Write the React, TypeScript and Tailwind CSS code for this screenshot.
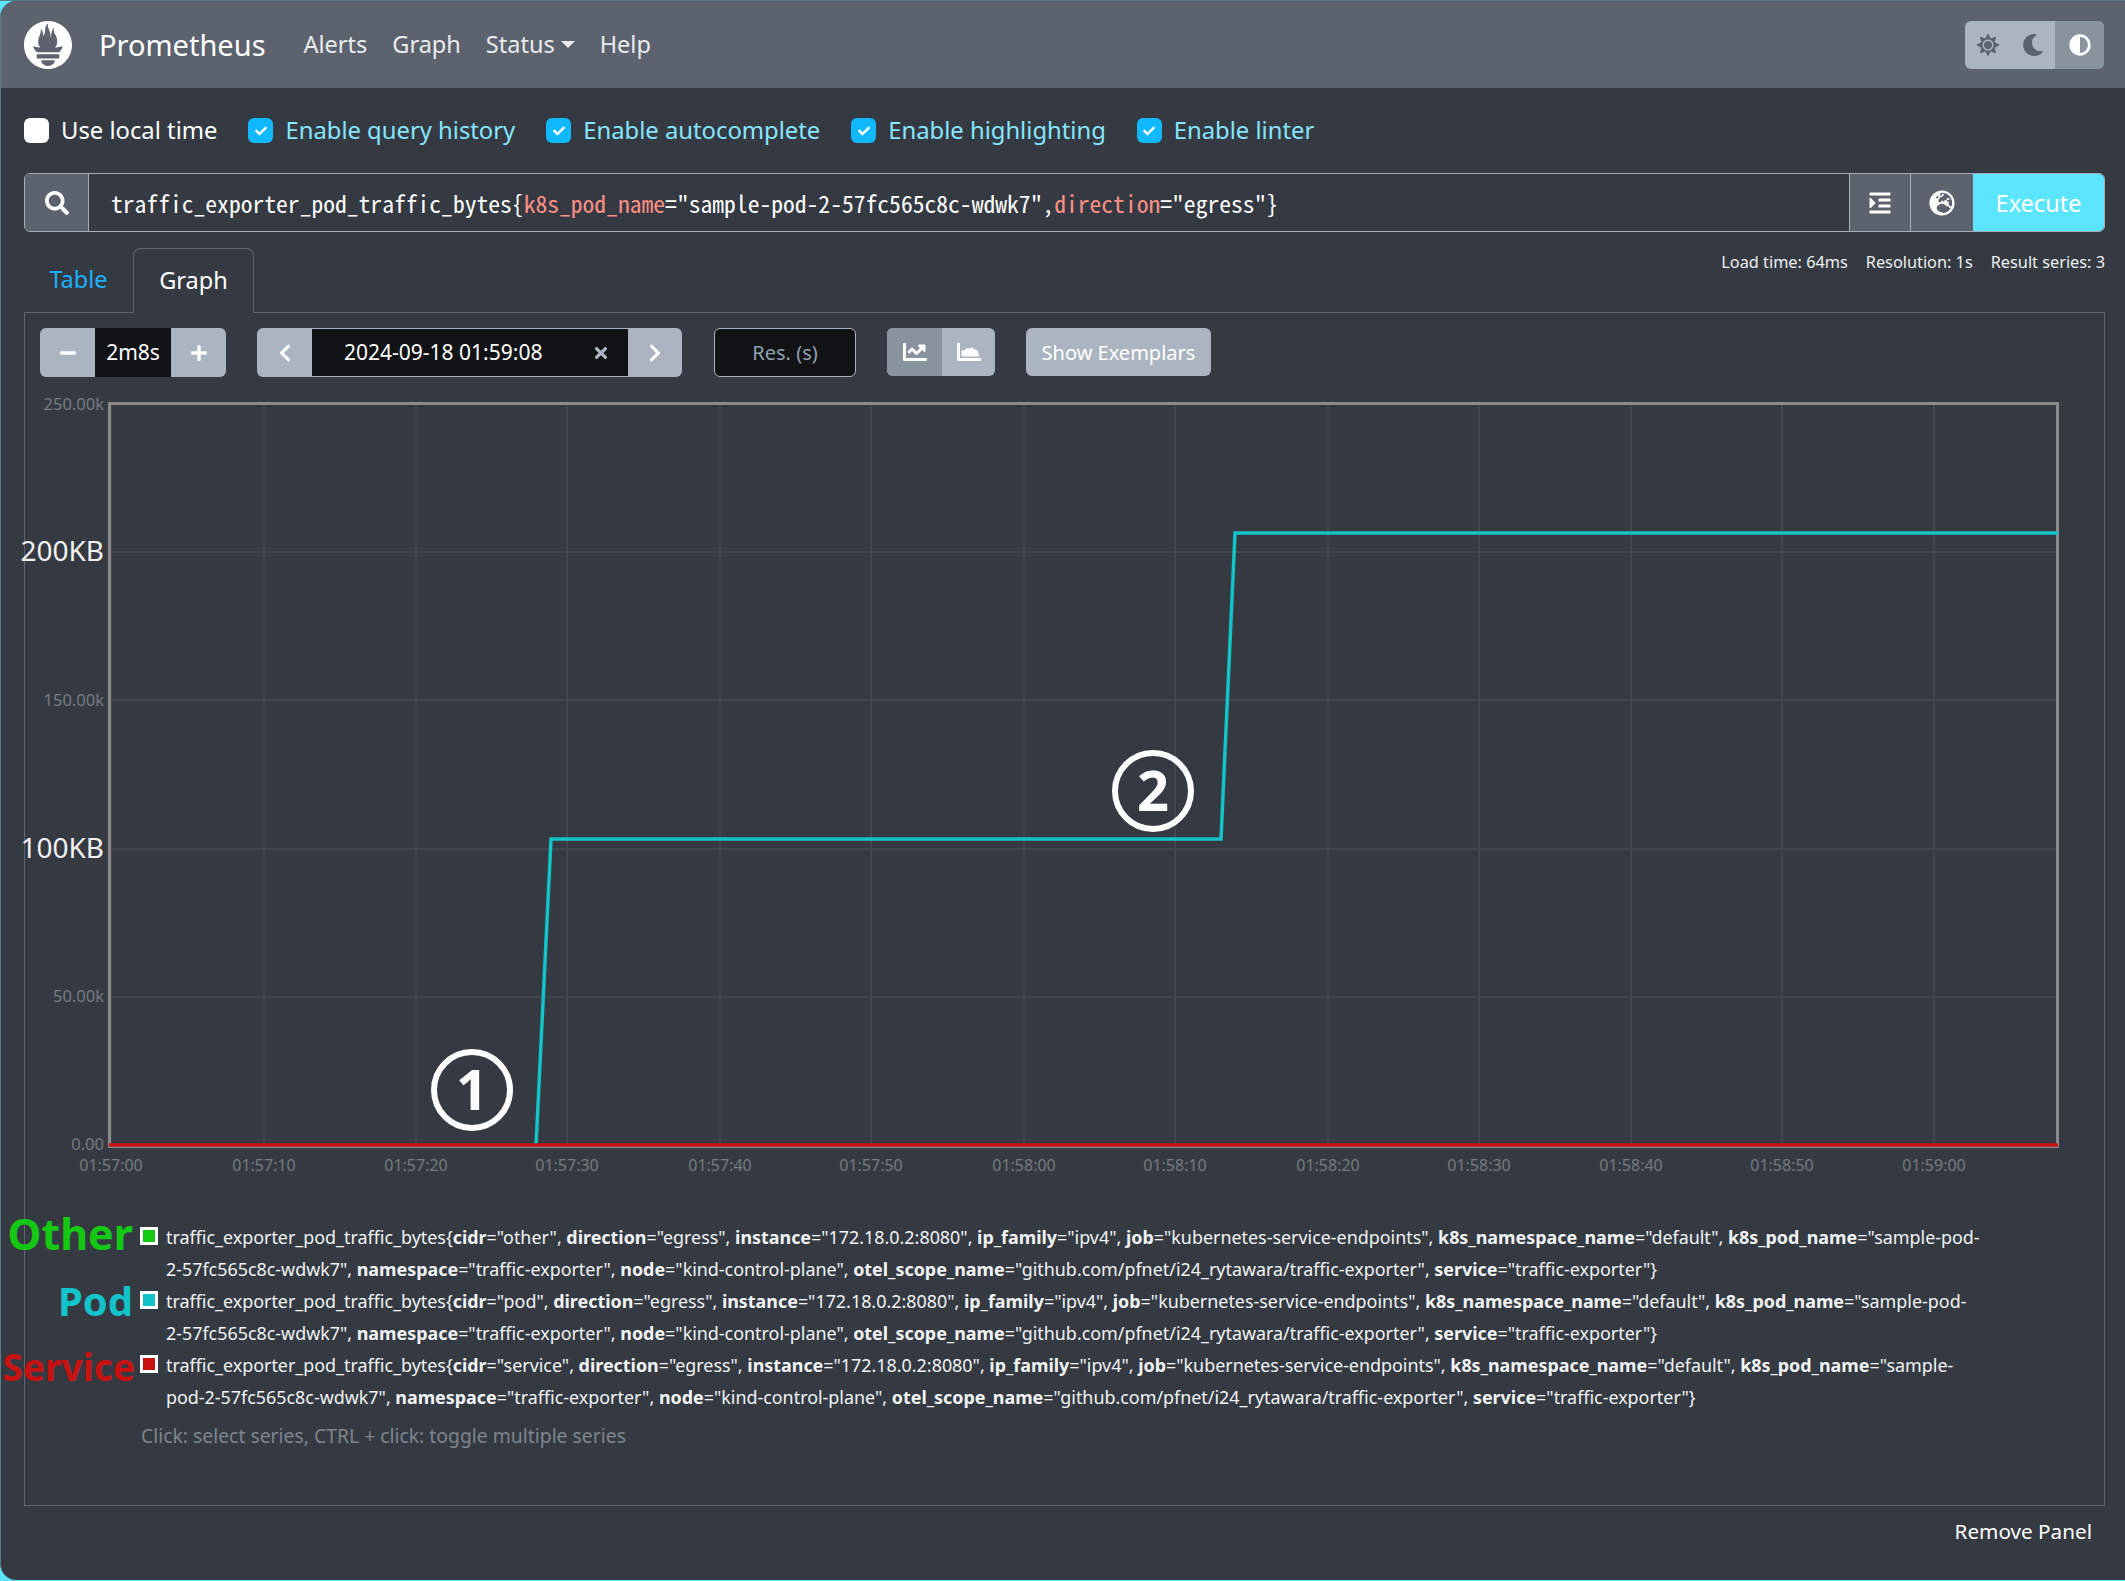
import React from "react";
import { SiPrometheus } from "react-icons/si";
import {
  FaSun,
  FaMoon,
  FaAdjust,
  FaSearch,
  FaIndent,
  FaGlobeEurope,
  FaChartLine,
  FaTimes,
  FaChevronLeft,
  FaChevronRight,
  FaPlus,
  FaMinus,
  FaCheck,
} from "react-icons/fa";

const timeTicks = ["01:57:00", "01:57:10", "01:57:20", "01:57:30", "01:57:40", "01:57:50", "01:58:00", "01:58:10", "01:58:20", "01:58:30", "01:58:40", "01:58:50", "01:59:00"];
const tickX = [71, 224, 376, 527, 680, 831, 984, 1135, 1288, 1439, 1591, 1742, 1894];

const yTicks = [
  { y: 13, label: "250.00k", big: false, nudge: 2 },
  { y: 162, label: "200KB", big: true, nudge: 0 },
  { y: 310, label: "150.00k", big: false, nudge: 1 },
  { y: 459, label: "100KB", big: true, nudge: 0 },
  { y: 607, label: "50.00k", big: false, nudge: 0 },
  { y: 755, label: "0.00", big: false, nudge: 0 },
];

function Check({ label, checked = true }: { label: string; checked?: boolean }) {
  return (
    <label className={`flex items-center gap-[12px] ${checked ? "text-[#86e6ff]" : "text-white"}`}>
      <span className={`w-[25px] h-[25px] rounded-[6px] flex items-center justify-center ${checked ? "bg-[#10b9ff]" : "bg-white"}`}>
        {checked && <FaCheck className="text-white text-[12px]" />}
      </span>
      {label}
    </label>
  );
}

function SeriesRow({ color, line1, line2 }: { color: string; line1: React.ReactNode; line2: React.ReactNode }) {
  return (
    <div className="flex items-start leading-[32px]">
      <span className="w-[18px] h-[18px] mt-[6px] mr-[8px] border-[3px] border-white shrink-0" style={{ background: color }} />
      <div className="whitespace-nowrap">
        {line1}
        <br />
        {line2}
      </div>
    </div>
  );
}

const B = ({ children }: { children: React.ReactNode }) => <b className="font-bold">{children}</b>;

function AreaIcon() {
  return (
    <svg viewBox="0 0 512 512" className="w-[24px] h-[24px]" fill="currentColor">
      <path d="M0 76c0-6.600 5.400-12 12-12h40c6.600 0 12 5.400 12 12v308h436c6.600 0 12 5.400 12 12v40c0 6.600-5.400 12-12 12H32c-17.700 0-32-14.300-32-32z" />
      <path d="M130 352a34 34 0 0 1-34-34v-64a42 42 0 0 1 72-30a62 62 0 0 1 104-34a62 62 0 0 1 108 18a56 56 0 0 1 68 50l24 60a24 24 0 0 1-20 34z" />
    </svg>
  );
}

function Chart() {
  return (
    <svg width="2040" height="790" viewBox="0 0 2040 790" className="block overflow-visible" fontFamily="'Noto Sans', sans-serif">
      {tickX.map((x) => (
        <line key={x} x1={x} x2={x} y1={13} y2={756} stroke="#464a50" strokeWidth="1.5" />
      ))}
      {yTicks.slice(1, 5).map((t) => (
        <line key={t.y} x1={69} x2={2018} y1={t.y} y2={t.y} stroke="#464a50" strokeWidth="1.5" />
      ))}
      <rect x="69.5" y="13.500" width="1948" height="743" fill="none" stroke="#8a8a8a" strokeWidth="3" />
      {yTicks.map((t) =>
        t.big ? (
          <text key={t.y} x={64} y={t.y + 9} textAnchor="end" fontSize="28" fill="#f1f1f1">{t.label}</text>
        ) : (
          <text key={t.y} x={64} y={t.y + 5 + t.nudge} textAnchor="end" fontSize="16.500" fill="#767a80">{t.label}</text>
        ),
      )}
      {timeTicks.map((t, i) => (
        <text key={t} x={tickX[i]} y={781} textAnchor="middle" fontSize="16" fill="#767a80">{t}</text>
      ))}
      <polyline points="496,756 511,449 1181,449 1195,143 2018,143" fill="none" stroke="#12c3c9" strokeWidth="3.500" />
      <line x1="69" x2="2018" y1="755" y2="755" stroke="#c81212" strokeWidth="3.500" />

      <circle cx="432" cy="700" r="38" fill="none" stroke="#fff" strokeWidth="6" />
      <text x="432" y="720" textAnchor="middle" fontSize="56" fontWeight="700" fill="#fff">1</text>
      <circle cx="1113" cy="401" r="38" fill="none" stroke="#fff" strokeWidth="6" />
      <text x="1113" y="421" textAnchor="middle" fontSize="56" fontWeight="700" fill="#fff">2</text>
    </svg>
  );
}

export default function App() {
  return (
    <div className="w-[2125px] h-[1581px] bg-[#5ce5ff] border-t border-t-[#4f8088] overflow-hidden font-['Noto_Sans',sans-serif] text-white">
      <div className="h-[1579px] rounded-l-[16px] border-l border-l-[#5b7f88] bg-[#353a42] overflow-hidden flex flex-col">
        {/* navbar */}
        <nav className="h-[87px] bg-[#5c636e] flex items-center pl-[23px] pr-[21px] shrink-0">
          <SiPrometheus className="text-white w-[48px] h-[48px] mr-[27px]" />
          <span className="text-[29px] mr-[38px]">Prometheus</span>
          <div className="flex items-center gap-[25px] text-[23.500px] text-[#e9ebee]">
            <span>Alerts</span>
            <span>Graph</span>
            <span className="flex items-center gap-[6px]">
              Status
              <span className="w-0 h-0 border-x-[7px] border-x-transparent border-t-[7px] border-t-[#e9ebee]" />
            </span>
            <span>Help</span>
          </div>
          <div className="ml-auto flex h-[48px] rounded-[6px] overflow-hidden text-[#5c636e] text-[22px] bg-[#aab5c1]">
            <span className="w-[46px] flex items-center justify-center"><FaSun /></span>
            <span className="w-[44px] flex items-center justify-center"><FaMoon /></span>
            <span className="w-[49px] flex items-center justify-center bg-[#89939e] text-white"><FaAdjust /></span>
          </div>
        </nav>

        <div className="flex flex-col pl-[23px] pr-[20px] flex-1">
          {/* options */}
          <div className="h-[85px] flex items-center text-[23.800px] gap-[31px]">
            <Check label="Use local time" checked={false} />
            <Check label="Enable query history" />
            <Check label="Enable autocomplete" />
            <Check label="Enable highlighting" />
            <Check label="Enable linter" />
          </div>

          {/* expression input */}
          <div className="h-[59px] flex border border-[#a6adb6] rounded-[6px] overflow-hidden">
            <span className="w-[64px] bg-[#5c636e] border-r border-[#a6adb6] flex items-center justify-center text-[24px]"><FaSearch /></span>
            <div className="flex-1 flex items-center pl-[22px] pt-[2px] font-['Noto_Sans_Mono_CJK_JP','Liberation_Mono',monospace] text-[23.580px] whitespace-nowrap">
              traffic_exporter_pod_traffic_bytes&#123;<span className="text-[#ff8f85]">k8s_pod_name</span>=&quot;sample-pod-2-57fc565c8c-wdwk7&quot;,<span className="text-[#ff8f85]">direction</span>=&quot;egress&quot;&#125;
            </div>
            <span className="w-[62px] bg-[#5c636e] border-x border-[#a6adb6] flex items-center justify-center text-[24px]"><FaIndent /></span>
            <span className="w-[62px] bg-[#5c636e] flex items-center justify-center text-[26px]"><FaGlobeEurope /></span>
            <span className="w-[131px] bg-[#5ce5ff] flex items-center justify-center text-[23.500px] pt-[2px]">Execute</span>
          </div>

          {/* tabs */}
          <div className="h-[80px] flex items-end relative">
            <span className="w-[109px] h-[64px] flex items-center justify-center text-[23.500px] text-[#1cb0ff]">Table</span>
            <span className="w-[121px] h-[65px] -mb-px relative z-10 flex items-center justify-center text-[23.500px] bg-[#353a42] border border-b-0 border-[#5f656e] rounded-t-[8px]">Graph</span>
            <div className="ml-auto self-start mt-[18px] flex gap-[18px] text-[16.300px] text-[#eef0f2]">
              <span>Load time: 64ms</span>
              <span>Resolution: 1s</span>
              <span>Result series: 3</span>
            </div>
          </div>

          {/* graph panel */}
          <div className="h-[1194px] border border-[#5f656e] pl-[15px] pt-[15px] relative">
            <div className="flex items-start h-[49px]">
              <div className="flex h-[49px] rounded-[6px] overflow-hidden bg-[#aab5c1] mr-[31px]">
                <span className="w-[55px] flex items-center justify-center text-[18px]"><FaMinus /></span>
                <span className="w-[76px] bg-[#111214] flex items-center justify-center text-[21px] pt-[1px]">2m8s</span>
                <span className="w-[55px] flex items-center justify-center text-[18px]"><FaPlus /></span>
              </div>
              <div className="flex h-[49px] rounded-[6px] overflow-hidden bg-[#aab5c1] mr-[32px]">
                <span className="w-[55px] flex items-center justify-center text-[20px]"><FaChevronLeft /></span>
                <span className="w-[316px] bg-[#111214] border-y border-[#aab5c1] flex items-center pl-[32px] pt-[1px] text-[21px] relative whitespace-nowrap">
                  2024-09-18 01:59:08
                  <FaTimes className="absolute right-[18px] text-[#aab5c1] text-[18px]" />
                </span>
                <span className="w-[54px] flex items-center justify-center text-[20px]"><FaChevronRight /></span>
              </div>
              <div className="w-[142px] h-[49px] mr-[31px] bg-[#111214] border border-[#aab5c1] rounded-[6px] flex items-center justify-center text-[20px] text-[#8fa0b0]">
                Res. (s)
              </div>
              <div className="flex h-[48px] rounded-[6px] overflow-hidden bg-[#aab5c1] mr-[31px] text-[24px]">
                <span className="w-[55px] flex items-center justify-center bg-[#89939e]"><FaChartLine /></span>
                <span className="w-[53px] flex items-center justify-center"><AreaIcon /></span>
              </div>
              <div className="w-[185px] h-[48px] rounded-[6px] bg-[#aab5c1] flex items-center justify-center text-[20px] pt-[1px] whitespace-nowrap">
                Show Exemplars
              </div>
            </div>

            <div className="mt-[13px]">
              <Chart />
            </div>

            {/* series legend */}
            <div className="mt-[41px] ml-[100px] text-[17.900px] relative text-[#f1f3f5]">
              <span className="absolute left-[-135px] top-[-15px] w-[128px] text-right text-[43px] leading-[56px] font-bold text-[#14c814]">Other</span>
              <span className="absolute left-[-132px] top-[52px] w-[125px] text-right text-[40px] leading-[56px] font-bold text-[#12c3c9]">Pod</span>
              <span className="absolute left-[-145px] top-[118px] w-[140px] text-right text-[37px] leading-[56px] font-bold text-[#c81212]">Service</span>
              <SeriesRow
                color="#14c814"
                line1={<>traffic_exporter_pod_traffic_bytes&#123;<B>cidr</B>=&quot;other&quot;, <B>direction</B>=&quot;egress&quot;, <B>instance</B>=&quot;172.18.0.2:8080&quot;, <B>ip_family</B>=&quot;ipv4&quot;, <B>job</B>=&quot;kubernetes-service-endpoints&quot;, <B>k8s_namespace_name</B>=&quot;default&quot;, <B>k8s_pod_name</B>=&quot;sample-pod-</>}
                line2={<>2-57fc565c8c-wdwk7&quot;, <B>namespace</B>=&quot;traffic-exporter&quot;, <B>node</B>=&quot;kind-control-plane&quot;, <B>otel_scope_name</B>=&quot;github.com/pfnet/i24_rytawara/traffic-exporter&quot;, <B>service</B>=&quot;traffic-exporter&quot;&#125;</>}
              />
              <SeriesRow
                color="#12c3c9"
                line1={<>traffic_exporter_pod_traffic_bytes&#123;<B>cidr</B>=&quot;pod&quot;, <B>direction</B>=&quot;egress&quot;, <B>instance</B>=&quot;172.18.0.2:8080&quot;, <B>ip_family</B>=&quot;ipv4&quot;, <B>job</B>=&quot;kubernetes-service-endpoints&quot;, <B>k8s_namespace_name</B>=&quot;default&quot;, <B>k8s_pod_name</B>=&quot;sample-pod-</>}
                line2={<>2-57fc565c8c-wdwk7&quot;, <B>namespace</B>=&quot;traffic-exporter&quot;, <B>node</B>=&quot;kind-control-plane&quot;, <B>otel_scope_name</B>=&quot;github.com/pfnet/i24_rytawara/traffic-exporter&quot;, <B>service</B>=&quot;traffic-exporter&quot;&#125;</>}
              />
              <SeriesRow
                color="#c81212"
                line1={<>traffic_exporter_pod_traffic_bytes&#123;<B>cidr</B>=&quot;service&quot;, <B>direction</B>=&quot;egress&quot;, <B>instance</B>=&quot;172.18.0.2:8080&quot;, <B>ip_family</B>=&quot;ipv4&quot;, <B>job</B>=&quot;kubernetes-service-endpoints&quot;, <B>k8s_namespace_name</B>=&quot;default&quot;, <B>k8s_pod_name</B>=&quot;sample-</>}
                line2={<>pod-2-57fc565c8c-wdwk7&quot;, <B>namespace</B>=&quot;traffic-exporter&quot;, <B>node</B>=&quot;kind-control-plane&quot;, <B>otel_scope_name</B>=&quot;github.com/pfnet/i24_rytawara/traffic-exporter&quot;, <B>service</B>=&quot;traffic-exporter&quot;&#125;</>}
              />
              <p className="mt-[8px] ml-[1px] text-[#7d858e] text-[19.350px]">Click: select series, CTRL + click: toggle multiple series</p>
            </div>
          </div>

          <div className="flex justify-end pt-[10px] pr-[13px] text-[20.700px]">Remove Panel</div>
        </div>
      </div>
    </div>
  );
}
